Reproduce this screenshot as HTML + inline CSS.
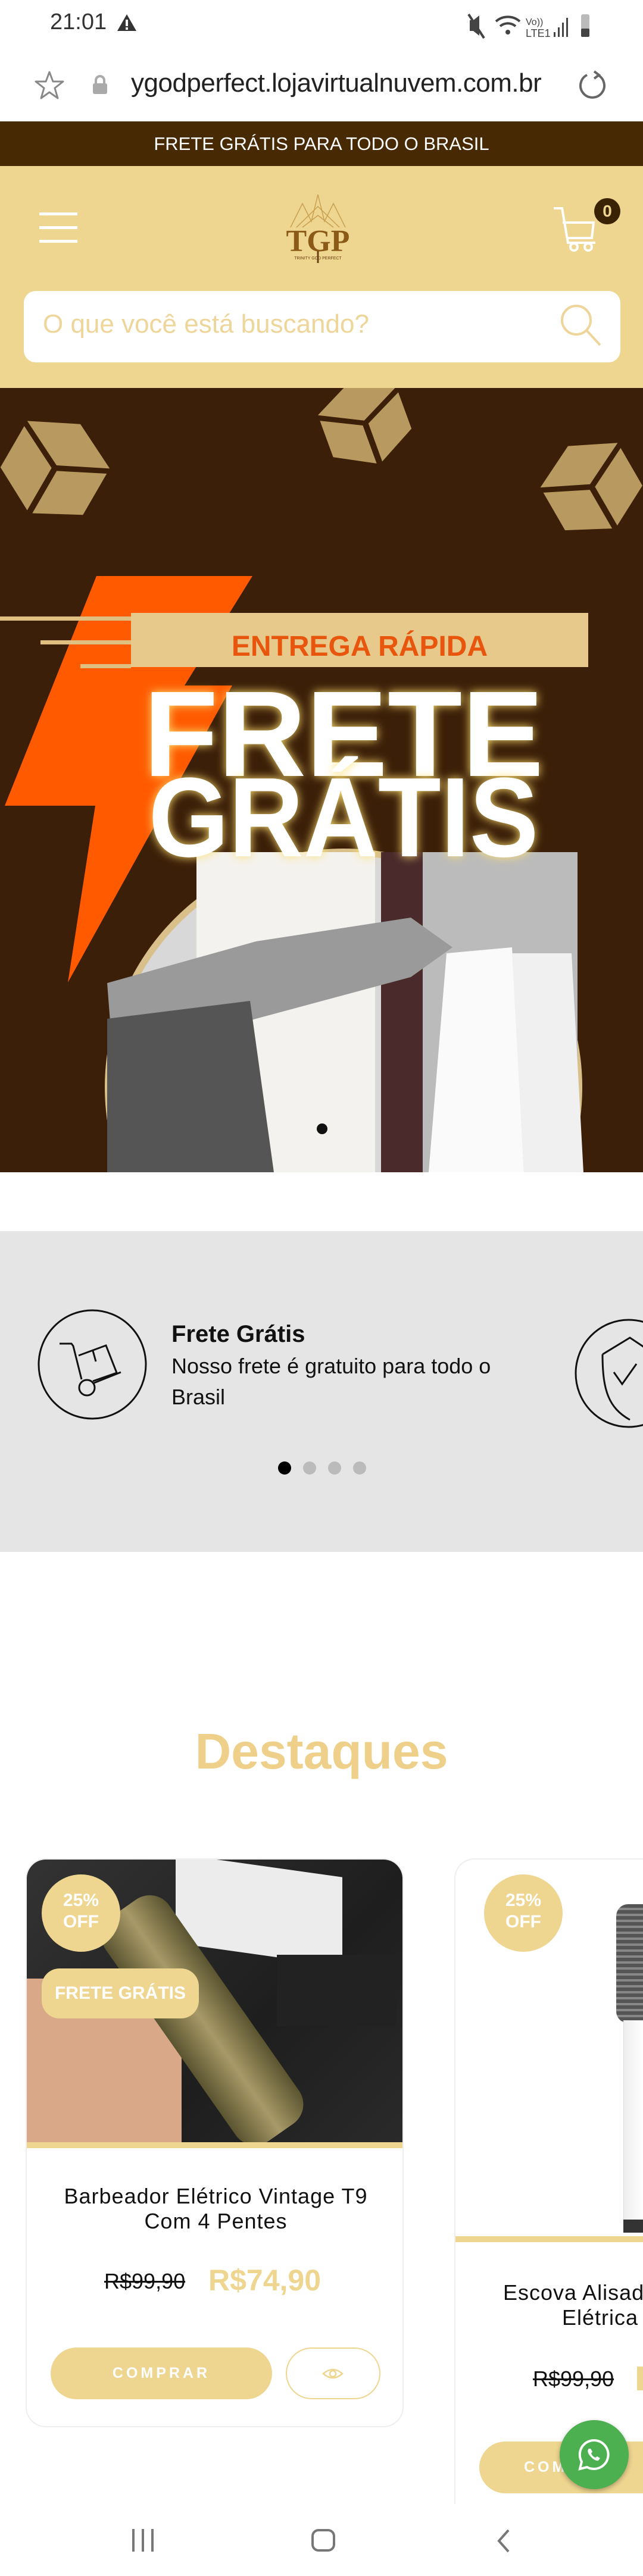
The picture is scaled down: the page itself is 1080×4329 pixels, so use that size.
<!DOCTYPE html>
<html><head><meta charset="utf-8"><style>
*{margin:0;padding:0;box-sizing:border-box}
body{width:1080px;height:4329px;position:relative;background:#fff;font-family:"Liberation Sans",sans-serif;overflow:hidden}
.a{position:absolute}
</style></head><body>
<!-- status bar -->
<div class="a" style="left:84px;top:16px;font-size:38px;color:#333">21:01</div>
<svg class="a" style="left:196px;top:22px" width="34" height="32"><polygon points="17,2 33,30 1,30" fill="#333"/><rect x="15" y="11" width="4" height="11" fill="#fff"/><rect x="15" y="24" width="4" height="4" fill="#fff"/></svg>
<svg class="a" style="left:785px;top:20px" width="220" height="50"><g fill="#444"><path d="M4 14h6l10-8v34l-10-8H4z"/><line x1="2" y1="4" x2="28" y2="44" stroke="#444" stroke-width="4"/><path d="M48 16a30 30 0 0 1 40 0" stroke="#444" stroke-width="4" fill="none"/><path d="M55 24a20 20 0 0 1 26 0" stroke="#444" stroke-width="4" fill="none"/><circle cx="68" cy="34" r="4"/><text x="98" y="22" font-size="16" font-family="Liberation Sans">Vo))</text><text x="98" y="42" font-size="18" font-family="Liberation Sans">LTE1</text><rect x="145" y="34" width="3" height="8"/><rect x="152" y="26" width="3" height="16"/><rect x="159" y="18" width="3" height="24"/><rect x="166" y="10" width="3" height="32"/><rect x="191" y="4" width="14" height="38" rx="3" fill="#bbb"/><rect x="191" y="28" width="14" height="14" rx="2" fill="#444"/></g></svg>
<!-- url bar -->
<svg class="a" style="left:58px;top:118px" width="50" height="50"><polygon points="25,3 31,19 48,19 34,30 39,47 25,37 11,47 16,30 2,19 19,19" fill="none" stroke="#888" stroke-width="3" stroke-linejoin="round"/></svg>
<svg class="a" style="left:154px;top:126px" width="28" height="34"><path d="M7 14V9a7 7 0 0 1 14 0v5" fill="none" stroke="#aaa" stroke-width="4"/><rect x="2" y="14" width="24" height="18" rx="3" fill="#aaa"/></svg>
<div class="a" style="left:220px;top:115px;font-size:44px;color:#222;letter-spacing:-0.5px">ygodperfect.lojavirtualnuvem.com.br</div>
<svg class="a" style="left:968px;top:116px" width="54" height="54"><path d="M36 10A20 20 0 1 1 18 10" fill="none" stroke="#666" stroke-width="4"/><path d="M30 4l8 6-8 6" fill="none" stroke="#666" stroke-width="4"/></svg>
<!-- promo -->
<div class="a" style="left:0;top:204px;width:1080px;height:75px;background:#472904;color:#fff;font-size:31px;text-align:center;line-height:75px">FRETE GRÁTIS PARA TODO O BRASIL</div>
<!-- header -->
<div class="a" style="left:0;top:279px;width:1080px;height:373px;background:#eed590"></div>
<div class="a" style="left:66px;top:357px;width:64px;height:5px;background:#fff"></div>
<div class="a" style="left:66px;top:380px;width:64px;height:5px;background:#fff"></div>
<div class="a" style="left:66px;top:403px;width:64px;height:5px;background:#fff"></div>
<svg class="a" style="left:478px;top:322px" width="112" height="122"><g stroke="#c9a050" stroke-width="1.5" fill="none"><path d="M10 60L30 20L45 50L56 5L67 50L82 20L102 60"/><path d="M20 60L56 25L92 60M30 60L56 40L82 60"/></g><text x="56" y="100" font-size="52" font-weight="bold" text-anchor="middle" fill="#8a5a16" font-family="Liberation Serif">TGP</text><text x="56" y="114" font-size="7" text-anchor="middle" fill="#6a4010">TRINITY  GOD  PERFECT</text><line x1="56" y1="100" x2="56" y2="120" stroke="#6a4010" stroke-width="3"/></svg>
<svg class="a" style="left:928px;top:338px" width="80" height="86"><g fill="none" stroke="#fff" stroke-width="4"><path d="M2 12h14l10 58h46"/><path d="M17 36h52l-3 26H25"/><circle cx="36" cy="77" r="6"/><circle cx="60" cy="77" r="6"/></g></svg>
<div class="a" style="left:998px;top:333px;width:44px;height:44px;border-radius:50%;background:#3a2204;color:#eed590;font-size:28px;font-weight:bold;text-align:center;line-height:44px">0</div>
<div class="a" style="left:40px;top:489px;width:1002px;height:120px;background:#fff;border-radius:20px"></div>
<div class="a" style="left:72px;top:520px;font-size:44px;color:#eed59a">O que você está buscando?</div>
<svg class="a" style="left:938px;top:508px" width="74" height="76"><circle cx="30" cy="30" r="24" fill="none" stroke="#eed59a" stroke-width="4"/><line x1="47" y1="47" x2="70" y2="72" stroke="#eed59a" stroke-width="4"/></svg>
<!-- hero -->
<div class="a" style="left:0;top:652px;width:1080px;height:1318px;background:#3b1f08;overflow:hidden">
<svg width="1080" height="1318">
<g fill="#b89a60">
<g transform="translate(95,130) rotate(30)"><polygon points="-80,-40 0,-80 80,-40 0,0"/><polygon points="-80,-30 -5,8 -5,90 -80,50"/><polygon points="5,8 80,-30 80,50 5,90"/></g>
<g transform="translate(610,50) rotate(-20)"><polygon points="-70,-30 0,-65 70,-30 0,5"/><polygon points="-70,-20 -5,12 -5,80 -70,45"/><polygon points="5,12 70,-20 70,45 5,80"/></g>
<g transform="translate(990,160) rotate(-30)"><polygon points="-75,-35 0,-72 75,-35 0,2"/><polygon points="-75,-25 -5,10 -5,85 -75,48"/><polygon points="5,10 75,-25 75,48 5,85"/></g>
</g>
<polygon points="162,316 424,316 310,500 390,500 114,999 160,702 8,702" fill="#ff5a00"/>
<g fill="#e0c080"><rect x="0" y="384" width="220" height="7"/><rect x="68" y="424" width="152" height="7"/><rect x="135" y="464" width="85" height="7"/></g>
<rect x="220" y="378" width="768" height="91" fill="#e7c98b"/>
<text x="604" y="450" text-anchor="middle" font-size="48" font-weight="bold" fill="#e8560e" font-family="Liberation Sans">ENTREGA RÁPIDA</text>
<circle cx="577" cy="1175" r="401" fill="#d9c08a"/>
<circle cx="577" cy="1175" r="390" fill="#d8d8d8"/>
<rect x="330" y="780" width="300" height="540" fill="#f4f2ee"/>
<rect x="640" y="780" width="70" height="540" fill="#4a2a2a"/>
<rect x="710" y="780" width="260" height="540" fill="#bbb"/>
<path d="M180 1000 L430 930 L690 890 L760 940 L690 990 L430 1060 L190 1130Z" fill="#9a9a9a"/>
<path d="M180 1060 L420 1030 L460 1318 L180 1318Z" fill="#555"/>
<polygon points="750,950 860,940 880,1318 720,1318" fill="#fafafa"/>
<polygon points="860,950 960,950 980,1318 880,1318" fill="#f0f0f0"/>
<text x="577" y="652" text-anchor="middle" font-size="205" font-weight="bold" fill="#fff" font-family="Liberation Sans" style="filter:drop-shadow(0 0 8px #ffe070)">FRETE</text>
<text x="577" y="787" text-anchor="middle" font-size="190" font-weight="bold" fill="#fff" font-family="Liberation Sans" textLength="655" lengthAdjust="spacingAndGlyphs" style="filter:drop-shadow(0 0 8px #ffe070)">GRÁTIS</text>
<circle cx="541" cy="1245" r="9" fill="#111"/>
</svg></div>
<!-- features -->
<div class="a" style="left:0;top:2069px;width:1080px;height:539px;background:#e5e5e5"></div>
<svg class="a" style="left:62px;top:2200px" width="186" height="186"><g fill="none" stroke="#111" stroke-width="3"><ellipse cx="93" cy="93" rx="90" ry="91"/><path d="M38 58h20l3 4 14 56"/><path d="M70 78l46-17 18 46-40 14"/><path d="M94 70l5 18"/><path d="M96 124l45-18"/><circle cx="84" cy="132" r="13"/></g></svg>
<div class="a" style="left:288px;top:2220px;font-size:40px;font-weight:bold;color:#111">Frete Grátis</div>
<div class="a" style="left:288px;top:2270px;font-size:36px;color:#111;line-height:52px;width:620px">Nosso frete é gratuito para todo o Brasil</div>
<svg class="a" style="left:964px;top:2216px" width="116" height="184"><ellipse cx="92" cy="92" rx="89" ry="90" fill="none" stroke="#111" stroke-width="3"/><path d="M48 60l46-28 30 20M48 60c0 60 10 90 46 110" fill="none" stroke="#111" stroke-width="3"/><path d="M67 90l14 20 24-34" fill="none" stroke="#111" stroke-width="3"/></svg>
<div class="a" style="left:467px;top:2456px;width:22px;height:22px;border-radius:50%;background:#000"></div>
<div class="a" style="left:509px;top:2456px;width:22px;height:22px;border-radius:50%;background:#bbb"></div>
<div class="a" style="left:551px;top:2456px;width:22px;height:22px;border-radius:50%;background:#bbb"></div>
<div class="a" style="left:593px;top:2456px;width:22px;height:22px;border-radius:50%;background:#bbb"></div>
<!-- destaques -->
<div class="a" style="left:0;top:2895px;width:1080px;text-align:center;font-size:84px;font-weight:bold;color:#eed08a">Destaques</div>
<!-- card 1 -->
<div class="a" style="left:43px;top:3123px;width:635px;height:956px;border:2px solid #eee;border-radius:34px;overflow:hidden;background:#fff">
<div class="a" style="left:0;top:0;width:635px;height:475px;background:linear-gradient(135deg,#333 0%,#1e1e1e 60%,#2a2a2a 100%)">
<div class="a" style="left:250px;top:10px;width:280px;height:150px;background:#ececec;transform:skewY(8deg)"></div>
<div class="a" style="left:0;top:200px;width:260px;height:275px;background:#d8a888;border-radius:0 120px 0 0"></div>
<div class="a" style="left:230px;top:40px;width:130px;height:460px;background:linear-gradient(90deg,#5a5430,#a89a68,#5a5430);transform:rotate(-35deg);border-radius:40px"></div>
<div class="a" style="left:420px;top:160px;width:200px;height:120px;background:#222"></div>
</div>
<div class="a" style="left:0;top:475px;width:635px;height:10px;background:#eed590"></div>
<div class="a" style="left:0;top:545px;width:635px;text-align:center;font-size:36px;line-height:42px;color:#111;letter-spacing:1px">Barbeador Elétrico Vintage T9<br>Com 4 Pentes</div>
<div class="a" style="left:130px;top:688px;font-size:36px;color:#111;text-decoration:line-through">R$99,90</div>
<div class="a" style="left:305px;top:678px;font-size:50px;font-weight:bold;color:#eed590">R$74,90</div>
<div class="a" style="left:40px;top:820px;width:372px;height:87px;border-radius:44px;background:#eed590;color:#fff;font-size:25px;font-weight:bold;letter-spacing:5px;text-align:center;line-height:87px">COMPRAR</div>
<div class="a" style="left:435px;top:820px;width:159px;height:87px;border-radius:44px;border:2px solid #eed590"></div>
<svg class="a" style="left:496px;top:852px" width="36" height="24"><path d="M2 12Q18 -2 34 12Q18 26 2 12Z" fill="none" stroke="#eed590" stroke-width="2.5"/><circle cx="18" cy="12" r="5" fill="none" stroke="#eed590" stroke-width="2.5"/></svg>
</div>
<div class="a" style="left:70px;top:3150px;width:132px;height:130px;border-radius:50%;background:#eed590;color:#fff;font-size:30px;font-weight:bold;text-align:center;padding-top:26px;line-height:36px">25%<br>OFF</div>
<div class="a" style="left:70px;top:3308px;width:264px;height:84px;border-radius:30px;background:#eed590;color:#fff;font-size:30px;font-weight:bold;text-align:center;line-height:84px">FRETE GRÁTIS</div>
<!-- card 2 -->
<div class="a" style="left:763px;top:3123px;width:317px;height:1100px;border:2px solid #eee;border-right:none;border-radius:34px 0 0 0;overflow:hidden;background:#fff">
<div class="a" style="left:270px;top:75px;width:47px;height:200px;background:repeating-linear-gradient(180deg,#555 0 6px,#888 6px 10px);border-radius:20px 0 0 20px"></div>
<div class="a" style="left:282px;top:270px;width:35px;height:340px;background:linear-gradient(90deg,#eee,#fff);border:1px solid #ddd"></div>
<div class="a" style="left:282px;top:605px;width:35px;height:22px;background:#333"></div>
<div class="a" style="left:0;top:633px;width:317px;height:10px;background:#eed590"></div>
<div class="a" style="left:80px;top:707px;font-size:36px;line-height:42px;color:#111;white-space:nowrap;letter-spacing:1px">Escova Alisadora<br>&nbsp;&nbsp;&nbsp;&nbsp;&nbsp;&nbsp;&nbsp;&nbsp;&nbsp;Elétrica</div>
<div class="a" style="left:130px;top:852px;font-size:36px;color:#111;text-decoration:line-through">R$99,90</div>
<div class="a" style="left:305px;top:852px;width:12px;height:40px;background:#eed590"></div>
<div class="a" style="left:40px;top:978px;width:277px;height:87px;border-radius:44px 0 0 44px;background:#eed590;color:#fff;font-size:25px;font-weight:bold;letter-spacing:5px;line-height:87px;padding-left:75px;white-space:nowrap;overflow:hidden">COMPRAR</div>
</div>
<div class="a" style="left:813px;top:3150px;width:132px;height:130px;border-radius:50%;background:#eed590;color:#fff;font-size:30px;font-weight:bold;text-align:center;padding-top:26px;line-height:36px">25%<br>OFF</div>
<!-- whatsapp -->
<div class="a" style="left:940px;top:4067px;width:116px;height:116px;border-radius:50%;background:#4caf50;box-shadow:0 3px 8px rgba(0,0,0,.3)"></div>
<svg class="a" style="left:968px;top:4095px" width="60" height="60"><path d="M30 6A24 24 0 0 0 9 42L6 54 18 51A24 24 0 1 0 30 6Z" fill="none" stroke="#fff" stroke-width="4"/><path d="M21 20c-2 2-3 6 2 12s10 9 14 8l3-4-5-3-3 2c-3-1-6-4-7-7l2-3-3-5z" fill="#fff"/></svg>
<!-- nav bar -->
<div class="a" style="left:0;top:4208px;width:1080px;height:121px;background:#fff"></div>
<div class="a" style="left:222px;top:4250px;width:4px;height:38px;background:#777"></div>
<div class="a" style="left:238px;top:4250px;width:4px;height:38px;background:#777"></div>
<div class="a" style="left:254px;top:4250px;width:4px;height:38px;background:#777"></div>
<div class="a" style="left:523px;top:4250px;width:40px;height:38px;border:4px solid #777;border-radius:12px"></div>
<svg class="a" style="left:830px;top:4248px" width="30" height="44"><path d="M24 4L8 22l16 18" fill="none" stroke="#777" stroke-width="4"/></svg>
</body></html>
